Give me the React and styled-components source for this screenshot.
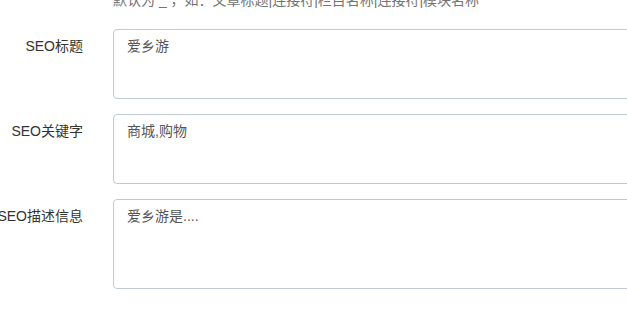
import React from 'react';
import styled, { createGlobalStyle } from 'styled-components';

const fields = [
  { label: 'SEO标题', value: '爱乡游', height: 70 },
  { label: 'SEO关键字', value: '商城,购物', height: 70 },
  { label: 'SEO描述信息', value: '爱乡游是....', height: 90 }
];

const App = () => (
  <>
    <GlobalStyle />
    <Form>
      <HintRow>
        <Hint>默认为 _ ，如：文章标题|连接符|栏目名称|连接符|模块名称</Hint>
      </HintRow>
      {fields.map(({ label, value, height }) => (
        <FormGroup key={label}>
          <Label>
            <span>{label}</span>
          </Label>
          <Field>
            <TextArea defaultValue={value} $height={height} />
          </Field>
        </FormGroup>
      ))}
    </Form>
  </>
);

const GlobalStyle = createGlobalStyle`
  html, body {
    margin: 0;
    padding: 0;
    background: #fff;
    overflow: hidden;
  }
  body {
    font-family: 'Liberation Sans', 'Noto Sans CJK SC', sans-serif;
    font-size: 14px;
    line-height: 20px;
    color: #333;
  }
`;

const Form = styled.form`
  display: flex;
  flex-direction: column;
  margin-top: -10px;
  width: 760px;
`;

const HintRow = styled.div`
  padding-left: 113px;
  margin-bottom: 19px;
`;

const Hint = styled.span`
  display: block;
  color: #737373;
  white-space: nowrap;
`;

const FormGroup = styled.div`
  display: flex;
  align-items: flex-start;
  margin-bottom: 15px;
`;

const Label = styled.label`
  display: flex;
  justify-content: flex-end;
  flex: 0 0 98px;
  min-width: 0;
  box-sizing: border-box;
  padding-top: 7px;
  padding-right: 15px;
  white-space: nowrap;
  color: #333;
`;

const Field = styled.div`
  flex: 1;
  padding-left: 15px;
`;

const TextArea = styled.textarea`
  display: block;
  box-sizing: border-box;
  width: 100%;
  height: ${({ $height }) => $height}px;
  padding: 6px 13px;
  border: 1px solid #c2cad8;
  border-radius: 4px;
  font-family: inherit;
  font-size: 14px;
  line-height: 20px;
  color: #555;
  resize: none;
  outline: none;
`;

export default App;
